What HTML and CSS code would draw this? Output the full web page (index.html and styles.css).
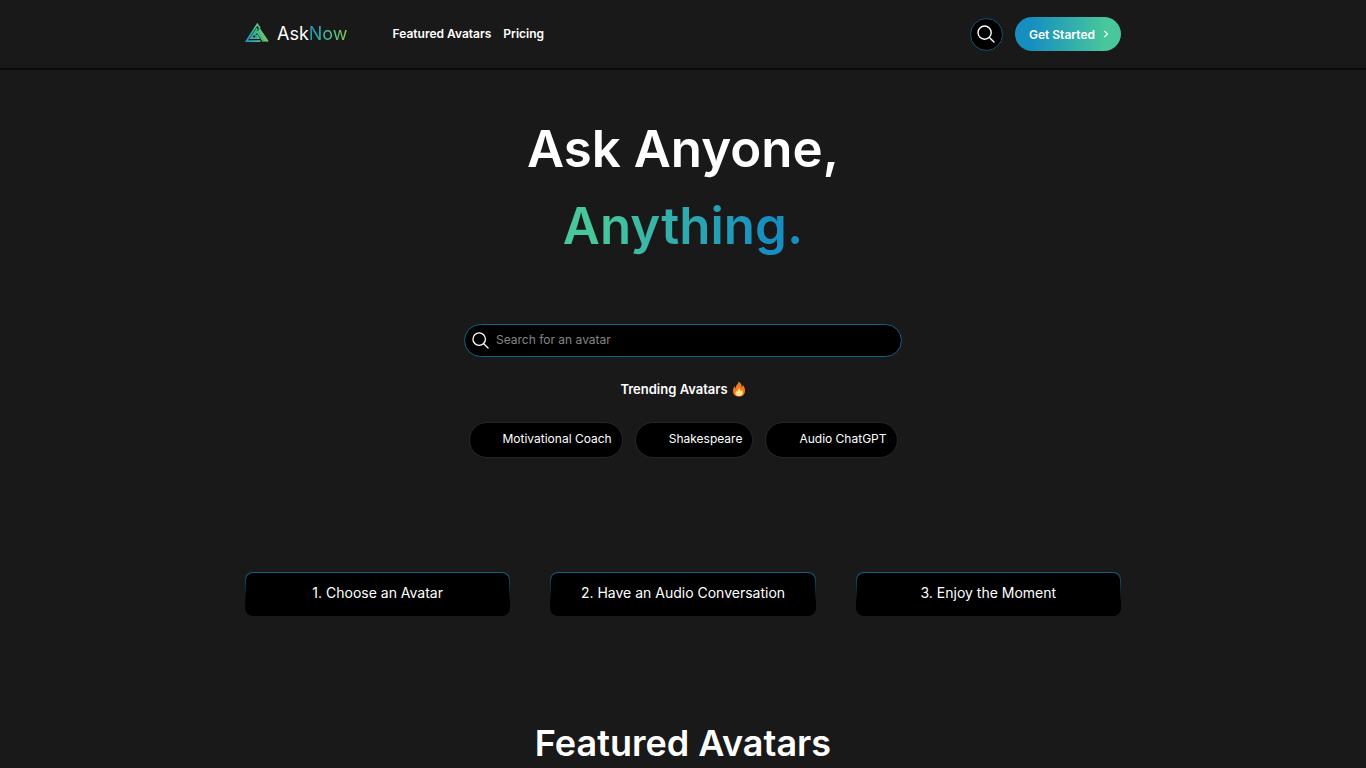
FILE: index.html
```html
<!DOCTYPE html>
<html lang="en">
<head>
<meta charset="utf-8">
<meta name="viewport" content="width=device-width, initial-scale=1">
<title>AskNow</title>
<link rel="stylesheet" href="styles.css">
</head>
<body>
<header class="header">
  <div class="container header-row">
    <a class="logo" href="#">
      <svg class="logo-mark" viewBox="0 0 25 20" fill="none" stroke-width="1.7" aria-hidden="true">
        <defs>
          <linearGradient id="mark" gradientUnits="userSpaceOnUse" x1="1" y1="18" x2="24" y2="12">
            <stop offset="0" stop-color="#1c93bd"/><stop offset=".5" stop-color="#40bf9c"/><stop offset="1" stop-color="#86c553"/>
          </linearGradient>
        </defs>
        <g stroke="url(#mark)">
          <path d="M15.5 18.2H1.4L12.3 1.2L15 5.2"/>
          <path d="M12.3 5.6L5.8 15.2H13.6L12.2 12.4L10.2 13.2"/>
          <path d="M8.8 12.2L12.3 8.6L18.4 18.6"/>
          <path d="M14 5.5L22.8 18.6M13.4 7.6L20.4 18.6" stroke-width="1.9"/>
        </g>
      </svg>
      <span class="logo-text">Ask<span class="logo-accent">Now</span></span>
    </a>
    <nav class="nav">
      <a href="#featured">Featured Avatars</a>
      <a href="#pricing">Pricing</a>
    </nav>
    <div class="actions">
      <button class="round-button" type="button" aria-label="Search">
        <svg class="search-icon" viewBox="0 0 18 18" aria-hidden="true"><circle cx="7.6" cy="7.6" r="6.6"/><path d="M12.4 12.4L17 17"/></svg>
      </button>
      <a class="cta" href="#start">Get Started
        <svg class="chevron" viewBox="0 0 6 8" aria-hidden="true"><path d="M1.2 .8L4.6 4L1.2 7.2"/></svg>
      </a>
    </div>
  </div>
</header>
<main class="container">
  <section class="hero">
    <h1 class="title">Ask Anyone,<br><span class="title-accent">Anything.</span></h1>
    <label class="search">
      <svg class="search-icon" viewBox="0 0 18 18" aria-hidden="true"><circle cx="7.6" cy="7.6" r="6.6"/><path d="M12.4 12.4L17 17"/></svg>
      <input type="search" placeholder="Search for an avatar" aria-label="Search for an avatar">
    </label>
    <h2 class="trending">Trending Avatars
      <svg class="flame" viewBox="0 0 14 16" aria-hidden="true">
        <path fill="#f47a1f" d="M6.4 .5C9 1.8 9.8 4 9.6 6.2C10.4 5.8 10.7 4.8 10.6 3.8C12.4 5.6 13.3 7.6 13 10.2C12.7 13.5 10.4 15.5 7 15.5C3.6 15.5 1.1 13.6 1 10.2C.9 8 1.8 6.3 2.9 5.1C2.9 6.2 3.2 7 3.9 7.4C3.8 5.5 4.2 4.6 5.2 3.6C6.2 2.6 6.6 1.7 6.4 .5Z"/>
        <path fill="#ffe58a" d="M7.2 6.8C7.6 8.6 8.6 9.3 9 10.4C9.5 10.1 9.8 9.6 9.9 9.1C11.5 11.8 10.7 15 7 15.1C3.6 15 2.8 12.2 4.2 9.8C4.5 10.5 4.8 10.8 5.3 10.9C5.2 9.2 6.8 8.4 7.2 6.8Z"/>
      </svg>
    </h2>
    <div class="pills">
      <a class="pill" href="#coach">Motivational Coach</a>
      <a class="pill" href="#shakespeare">Shakespeare</a>
      <a class="pill" href="#chatgpt">Audio ChatGPT</a>
    </div>
  </section>
  <section class="steps">
    <div class="step">1. Choose an Avatar</div>
    <div class="step">2. Have an Audio Conversation</div>
    <div class="step">3. Enjoy the Moment</div>
  </section>
  <h2 class="section-title" id="featured">Featured Avatars</h2>
</main>
</body>
</html>
```
FILE: styles.css
```css
* { box-sizing: border-box; }
html { overflow-x: hidden; scrollbar-width: none; }
body {
  margin: 0;
  background: #191919;
  color: #fff;
  font-family: Inter, "Liberation Sans", sans-serif;
  font-size: 12px;
}
a { color: inherit; text-decoration: none; }
.container { width: 100%; max-width: 908px; margin: 0 auto; padding: 0 16px; }

.header { border-bottom: 2px solid #0b0b0b; }
.header-row { display: flex; align-items: center; min-height: 68px; }
.logo { display: flex; align-items: center; gap: 7px; }
.logo-mark { width: 25px; height: 20px; margin-bottom: 3px; }
.logo-text { font-size: 18px; line-height: 24px; }
.logo-accent {
  background: linear-gradient(90deg, #1c93bd, #43c19c 45%, #8cc84e);
  background-clip: text;
  color: transparent;
}
.nav { display: flex; gap: 12px; margin-left: 45px; padding-bottom: 2px; font-weight: 600; }
.actions { display: flex; align-items: center; gap: 12px; margin-left: auto; }
.search-icon { flex: none; width: 18px; height: 18px; fill: none; stroke: #fff; stroke-width: 1.4; stroke-linecap: round; }
.search .search-icon { width: 17px; height: 17px; }
.round-button {
  display: grid;
  place-items: center;
  width: 33px;
  height: 33px;
  padding: 0;
  border: 1px solid #0f587a;
  border-radius: 50%;
  background: #000;
}
.cta {
  display: flex;
  align-items: center;
  gap: 8px;
  height: 34px;
  padding: 0 12px 0 14px;
  border-radius: 17px;
  background: linear-gradient(90deg, #168fc0 15%, #48c79c 85%);
  font-weight: 600;
}
.chevron { width: 6px; height: 8px; fill: none; stroke: #fff; stroke-width: 1.1; }

.hero { display: flex; flex-direction: column; align-items: center; padding-top: 40px; }
.title { margin: 0; font-size: 51px; line-height: 77px; font-weight: 600; text-align: center; }
.title-accent {
  display: inline-block;
  background: linear-gradient(270deg, #168fc0 15%, #48c79c 85%);
  background-clip: text;
  color: transparent;
}
.search {
  display: flex;
  align-items: center;
  gap: 7px;
  width: 50%;
  height: 33px;
  margin-top: 60px;
  padding: 0 8px 0 7px;
  border: 1px solid #0f6487;
  border-radius: 17px;
  background: #000;
}
.search input {
  flex: 1;
  min-width: 0;
  padding: 0 0 2px;
  border: 0;
  outline: 0;
  background: none;
  color: #fff;
  font: inherit;
}
.search input::placeholder { color: #858585; opacity: 1; }
.trending { display: flex; align-items: center; gap: 4px; margin: 22px 0 0; font-size: 13px; line-height: 20px; font-weight: 600; }
.flame { width: 14px; height: 16px; }
.pills { display: flex; flex-wrap: wrap; justify-content: center; gap: 12px; margin-top: 23px; }
.pill {
  padding: 0 10px 2px 33px;
  border: 1px solid #222827;
  border-radius: 18px;
  background: #000;
  line-height: 32px;
}

.steps { display: grid; grid-template-columns: repeat(3, 1fr); gap: 40px; margin-top: 114px; }
.step {
  padding: 9px 8px 11px;
  border: 1px solid transparent;
  border-radius: 8px;
  background: linear-gradient(#000, #000) padding-box, linear-gradient(#0f6487, #000 70%) border-box;
  font-size: 14px;
  line-height: 22px;
  text-align: center;
}
.section-title { margin: 103px 0 0; font-size: 36px; line-height: 49px; font-weight: 600; text-align: center; }
```
